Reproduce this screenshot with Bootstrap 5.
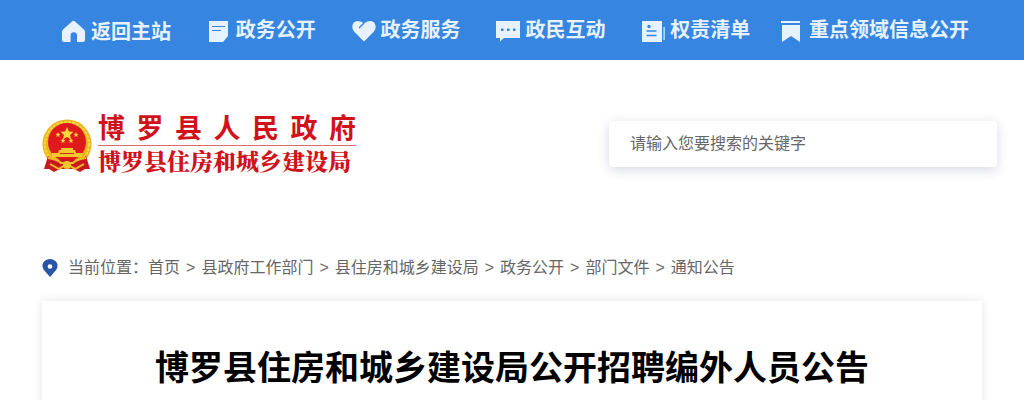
<!DOCTYPE html>
<html lang="zh-CN">
<head>
<meta charset="utf-8">
<meta name="viewport" content="width=device-width, initial-scale=1">
<title>博罗县住房和城乡建设局公开招聘编外人员公告</title>
<link href="https://cdn.jsdelivr.net/npm/bootstrap@5.3.0/dist/css/bootstrap.min.css" rel="stylesheet">
<style>
  body { font-family: "Liberation Sans", "Noto Sans CJK SC", sans-serif; color: #666; background: #fff; }
  .page-x { padding-left: 42px; padding-right: 42px; }
  .topbar { background: #3685e0; height: 60px; padding: 0 55px 0 62px; }
  .topbar-grid { display: grid; grid-template-columns: repeat(4, 145fr) 139fr 188fr; }
  .topbar a { color: #e6f2ff; font-size: 20px; line-height: 30px; font-weight: 700; }
  .topbar svg { width: 24px; height: 24px; margin-right: 5px; fill: #e6f2ff; }
  .masthead { padding: 52px 27px 0 42px; height: 196px; }
  .emblem { width: 50px; height: 54px; margin: 7px 6px 0 0; }
  .site-name { width: 258px; color: #d0121b; font-weight: 700; }
  .name-top { font-size: 27px; line-height: 32px; padding-top: 1px; text-align-last: justify; border-bottom: 1px solid #dc6a6c; }
  .name-sub { font-family: "Noto Serif CJK SC", "Noto Sans CJK SC", serif; font-size: 23px; line-height: 30px; font-weight: 900; }
  .search { width: 388px; margin-top: 9px; }
  .search input { border: 0; border-radius: 4px; padding: 11px 21px; font-size: 16px; line-height: 24px; box-shadow: 0 3px 12px rgba(40, 45, 110, .18); }
  .search input::placeholder { color: #666; opacity: 1; }
  .crumbs { font-size: 16px; line-height: 24px; }
  .crumbs .pin { width: 16px; height: 20px; margin-right: 10px; }
  .crumbs .breadcrumb { --bs-breadcrumb-divider: ">"; --bs-breadcrumb-divider-color: #666; --bs-breadcrumb-item-padding-x: 6px; --bs-breadcrumb-item-active-color: #666; }
  .crumbs a { color: #666; }
  .article { margin: 21px 42px 0; padding: 42px 20px 60px; box-shadow: 0 0 10px rgba(0, 0, 0, .1); background: #fff; }
  .article h1 { font-size: 34px; line-height: 50px; font-weight: 700; color: #000; }
</style>
</head>
<body>
<nav class="topbar" aria-label="主导航">
  <div class="topbar-grid align-items-center h-100">
    <a href="#" class="d-flex align-items-center text-decoration-none text-nowrap pt-1">
      <svg viewBox="0 0 24 24" aria-hidden="true"><path d="M10 1.500Q11.500 0 13 1.500L22 9.500Q23 10.500 23 12V20Q23 22 21 22H15V15.500A3.200 3.200 0 0 0 8.600 15.500V22H2Q0 22 0 20V12Q0 10.500 1 9.500Z"/></svg>返回主站</a>
    <a href="#" class="d-flex align-items-center text-decoration-none text-nowrap">
      <svg viewBox="0 0 24 24" aria-hidden="true"><path d="M2 3H21V18L16 24H2Z"/><path d="M5 8.500H18M5 12.500H14" stroke="#3685e0" stroke-width="1.200"/></svg>政务公开</a>
    <a href="#" class="d-flex align-items-center text-decoration-none text-nowrap">
      <svg viewBox="0 0 24 24" aria-hidden="true"><path d="M12 23.500L2 13.500C-1 10 0 3 6 3Q9.500 3 12 5.500Q14.500 3 18 3C24 3 25 10 22 13.500Z"/><path d="M12 5L7 10" stroke="#3685e0" stroke-width="1.500"/></svg>政务服务</a>
    <a href="#" class="d-flex align-items-center text-decoration-none text-nowrap">
      <svg viewBox="0 0 24 24" aria-hidden="true"><path d="M0 3H24V20H8L4 23.500V20H0Z"/><path d="M5 10.500H7.500V13H5ZM11 10.500H13.500V13H11ZM17 10.500H19.500V13H17Z" fill="#3685e0"/></svg>政民互动</a>
    <a href="#" class="d-flex align-items-center text-decoration-none text-nowrap">
      <svg viewBox="0 0 24 24" aria-hidden="true"><path d="M1 3H21V24H1ZM22.500 9H23.700V22H22.500Z"/><circle cx="8" cy="8.500" r="1.700" fill="#3685e0"/><path d="M5.500 13H15.500M5.500 17.500H15.500" stroke="#3685e0" stroke-width="1.300"/></svg>权责清单</a>
    <a href="#" class="d-flex align-items-center text-decoration-none text-nowrap">
      <svg viewBox="0 0 24 24" aria-hidden="true"><path d="M1 3H20V5H1ZM2 7H20V24L11 18L2 24Z"/></svg>重点领域信息公开</a>
  </div>
</nav>

<header class="masthead d-flex justify-content-between align-items-start">
  <a href="#" class="d-flex align-items-start text-decoration-none">
    <svg class="emblem" viewBox="0 0 50 54" aria-hidden="true">
      <circle cx="25" cy="25" r="24.500" fill="#e9b51c"/>
      <circle cx="25" cy="25" r="22" fill="none" stroke="#f7d648" stroke-width="2" stroke-dasharray="3 1"/>
      <circle cx="25" cy="23" r="19" fill="#e01a1c"/>
      <path fill="#f9d93c" d="M25 8L26.900 12.500L31.500 12.800L28 16L29.200 20.500L25 18L20.800 20.500L22 16L18.500 12.800L23.100 12.500Z"/>
      <g fill="#f9d93c"><path id="star" d="M16 13L16.700 14.800L18.500 14.900L17.100 16.100L17.600 18L16 17L14.400 18L14.900 16.100L13.500 14.900L15.300 14.800Z"/><use href="#star" x="18"/><use href="#star" x="5" y="6"/><use href="#star" x="13" y="6"/></g>
      <path fill="#f5c72d" d="M19 29H31V31H33L34 34H40V38H10V34H16L17 31H19Z"/>
      <path d="M18 34.500H32" stroke="#c33119"/>
      <path fill="#c91920" d="M6 37Q13 43 18 40H32Q37 43 44 37L48 50L43 50L38 53L32 50H18L12 53L7 50L2 50Z"/>
      <path d="M6 39Q15 40 19 44H31Q35 40 44 39M8 45L17 50Q25 43 33 50L42 45" fill="none" stroke="#f1bd25" stroke-width="2"/>
      <circle cx="25" cy="46" r="4" fill="#f1c62c"/>
    </svg>
    <span class="site-name d-block text-nowrap">
      <span class="name-top d-block">博 罗 县 人 民 政 府</span>
      <span class="name-sub d-block">博罗县住房和城乡建设局</span>
    </span>
  </a>
  <form class="search" role="search">
    <label for="keyword" class="visually-hidden">搜索</label>
    <input id="keyword" type="text" class="form-control" placeholder="请输入您要搜索的关键字">
  </form>
</header>

<main>
  <div class="crumbs page-x d-flex align-items-center">
    <svg class="pin" viewBox="0 0 16 20" aria-hidden="true"><path fill="#2856a5" d="M8 19L2.300 12.500C-2 7 2 1 8 1S18 7 13.700 12.500Z"/><circle cx="8" cy="8.500" r="2.300" fill="#fff"/></svg>
    <span>当前位置：</span>
    <nav aria-label="当前位置">
      <ol class="breadcrumb mb-0">
        <li class="breadcrumb-item"><a href="#" class="text-decoration-none">首页</a></li>
        <li class="breadcrumb-item"><a href="#" class="text-decoration-none">县政府工作部门</a></li>
        <li class="breadcrumb-item"><a href="#" class="text-decoration-none">县住房和城乡建设局</a></li>
        <li class="breadcrumb-item"><a href="#" class="text-decoration-none">政务公开</a></li>
        <li class="breadcrumb-item"><a href="#" class="text-decoration-none">部门文件</a></li>
        <li class="breadcrumb-item"><a href="#" class="text-decoration-none">通知公告</a></li>
      </ol>
    </nav>
  </div>
  <article class="article">
    <h1 class="text-center mb-0">博罗县住房和城乡建设局公开招聘编外人员公告</h1>
  </article>
</main>
<script src="https://cdn.jsdelivr.net/npm/bootstrap@5.3.0/dist/js/bootstrap.bundle.min.js"></script>
</body>
</html>
